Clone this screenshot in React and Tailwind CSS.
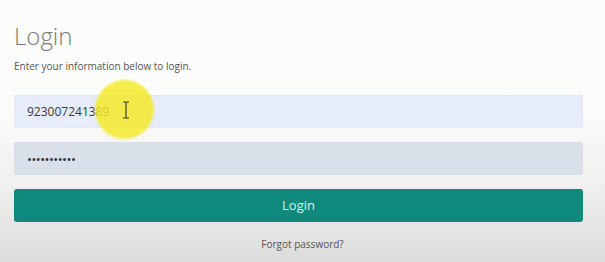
import { useState } from "react";

function App() {
    const [phone, setPhone] = useState("923007241389");
    const [password, setPassword] = useState("secret12345");

    return (
        <div
            className="relative h-[262px] w-[605px] overflow-hidden bg-gradient-to-b from-[#fcfcfb] from-40% via-[#f0f0ef] via-70% to-[#dcdcdc] px-[14px] pt-[20px]"
            style={{ fontFamily: '"Open Sans", sans-serif' }}
        >
            <h1 className="text-[24px] font-light leading-[32px] text-[#7a7a7a]">Login</h1>
            <p className="mt-[7px] text-[10px] leading-[14px] text-[#555]">
                Enter your information below to login.
            </p>

            <form className="mt-[22px] flex w-[569px] flex-col" onSubmit={(e) => e.preventDefault()}>
                <input
                    value={phone}
                    onChange={(e) => setPhone(e.target.value)}
                    className="h-[33px] w-full rounded-[2px] border border-[#e2e8f2] bg-[#e6ecf9] px-[12px] text-[12px] text-[#3a3a3a] outline-none"
                />
                <input
                    type="password"
                    value={password}
                    onChange={(e) => setPassword(e.target.value)}
                    className="mt-[14px] h-[33px] w-full rounded-[2px] border border-[#d8dee8] bg-[#d9e0ea] px-[12px] text-[13px] tracking-[-0.5px] text-[#333] outline-none"
                />
                <button
                    type="submit"
                    className="mt-[14px] h-[33px] w-full rounded-[3px] bg-[#0e8a7c] text-[13px] text-[#d8efe9]"
                >
                    Login
                </button>
            </form>

            <p className="mt-[15px] text-center text-[10px] text-[#555]">
                <a href="#">Forgot password?</a>
            </p>

            {/* cursor highlight from screen recording */}
            <div className="pointer-events-none absolute left-[95px] top-[80px] h-[59px] w-[59px] rounded-full bg-[#f3ea2a]/85 blur-[1px]" />
            <svg
                className="pointer-events-none absolute left-[122px] top-[101px]"
                width="8"
                height="18"
                viewBox="0 0 8 18"
                fill="none"
                stroke="#3a3a30"
                strokeWidth="1.2"
            >
                <path d="M1 1h2.2c.5 0 .8.4.8.8M7 1H4.8c-.5 0-.8.4-.8.8V16.2c0 .4-.3.8-.8.8H1M7 17H4.8c-.5 0-.8-.4-.8-.8" />
            </svg>
        </div>
    );
}

export default App;
